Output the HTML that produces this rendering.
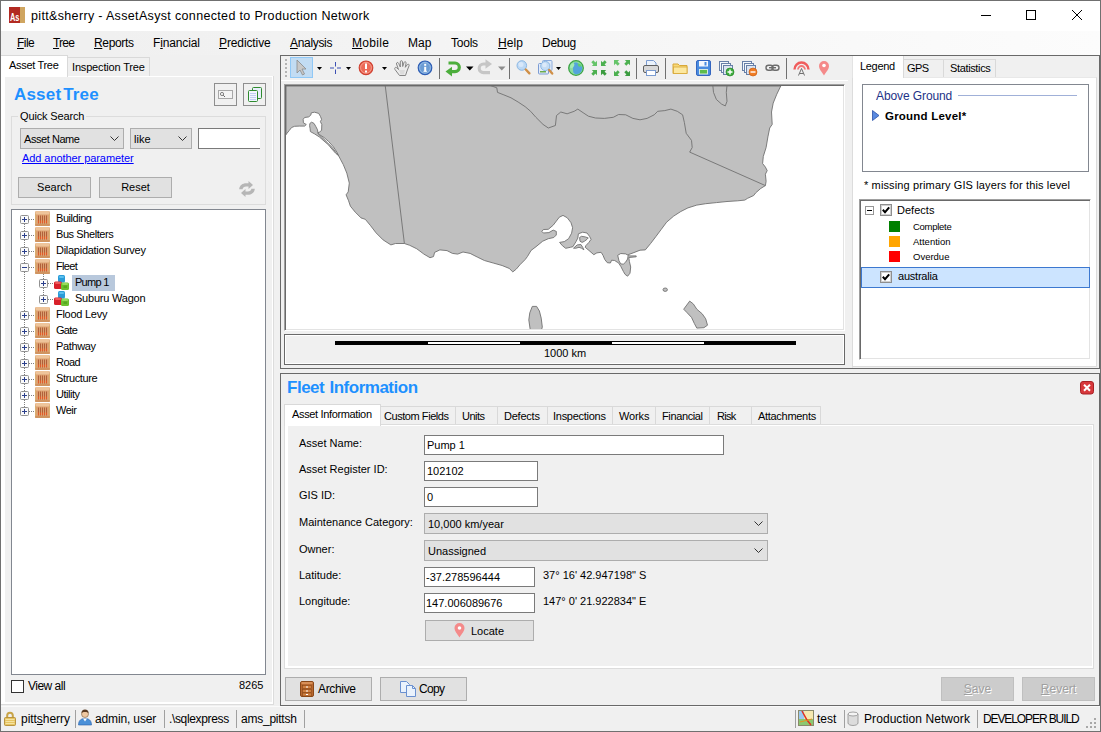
<!DOCTYPE html>
<html><head><meta charset="utf-8">
<style>
*{box-sizing:border-box;margin:0;padding:0}
html,body{width:1101px;height:732px;overflow:hidden;background:#f0f0f0}
body{font-family:"Liberation Sans",sans-serif;font-size:11px;color:#000;position:relative}
.a{position:absolute}
.t{position:absolute;white-space:nowrap;line-height:14px}
.ui{font-size:12px}
.btn{position:absolute;background:#e1e1e1;border:1px solid #adadad}
.inp{position:absolute;background:#fff;border:1px solid #7a7a7a}
.cmb{position:absolute;background:#e1e1e1;border:1px solid #adadad}
.tab{position:absolute;background:#f0f0f0;border:1px solid #d9d9d9;border-bottom:none}
.tabs{position:absolute;background:#fff;border:1px solid #d9d9d9;border-bottom:none}
.sep{position:absolute;width:1px;background:#a0a0a0}
.chev{position:absolute;width:9px;height:5px}
</style></head><body>
<!-- title bar -->
<div class="a" style="left:0;top:0;width:1101px;height:31px;background:#fff"></div>
<svg class="a" style="left:9px;top:7px" width="16" height="16"><rect width="11" height="16" fill="#b22a22"/><rect x="11" width="5" height="16" fill="#cfa560"/><text x="1" y="14" font-family="Liberation Sans" font-size="11" font-weight="bold" fill="#fff" textLength="9.500" lengthAdjust="spacingAndGlyphs">As</text></svg>
<div class="t" style="letter-spacing:0.34px;left:31px;top:8px;font-size:12.500px;line-height:16px">pitt&amp;sherry - AssetAsyst connected to Production Network</div>
<svg class="a" style="left:975px;top:1px" width="125" height="30" fill="none" stroke="#000" stroke-width="1"><path d="M6 14.500h10"/><rect x="51.500" y="9.500" width="9" height="9"/><path d="M97 9l10 10M107 9l-10 10"/></svg>
<!-- menu bar -->
<div class="a" style="left:1px;top:31px;width:1099px;height:24px;background:linear-gradient(to right,#f0f0f0 0%,#f0f0f0 10%,#fcfcfc 100%)"></div>
<div class="t ui" style="letter-spacing:-0.55px;left:17px;top:36px"><u>F</u>ile</div>
<div class="t ui" style="letter-spacing:-0.78px;left:53px;top:36px"><u>T</u>ree</div>
<div class="t ui" style="letter-spacing:-0.34px;left:94px;top:36px"><u>R</u>eports</div>
<div class="t ui" style="letter-spacing:-0.14px;left:153px;top:36px">F<u>i</u>nancial</div>
<div class="t ui" style="letter-spacing:-0.11px;left:219px;top:36px"><u>P</u>redictive</div>
<div class="t ui" style="letter-spacing:-0.33px;left:290px;top:36px"><u>A</u>nalysis</div>
<div class="t ui" style="letter-spacing:0.33px;left:352px;top:36px"><u>M</u>obile</div>
<div class="t ui" style="letter-spacing:-0.02px;left:408px;top:36px">Map</div>
<div class="t ui" style="letter-spacing:-0.23px;left:451px;top:36px">Tools</div>
<div class="t ui" style="letter-spacing:0.04px;left:498px;top:36px"><u>H</u>elp</div>
<div class="t ui" style="letter-spacing:-0.27px;left:542px;top:36px">Debug</div>

<!-- LEFT PANEL -->
<div class="a" style="left:1px;top:76px;width:273px;height:629px;background:#fff;border-bottom:1px solid #dcdcdc;border-right:1px solid #dcdcdc"></div>
<div class="a" style="left:5px;top:77px;width:267px;height:625px;background:#f0f0f0"></div>
<div class="tab" style="left:67px;top:57px;width:83px;height:19px"></div>
<div class="tabs" style="left:1px;top:55px;width:67px;height:22px;border-left:none"></div>
<div class="t" style="letter-spacing:-0.31px;left:9px;top:58px">Asset Tree</div>
<div class="t" style="letter-spacing:-0.17px;left:72px;top:60px">Inspection Tree</div>
<div class="t" style="letter-spacing:0.19px;left:14px;top:86px;font-size:17px;font-weight:bold;color:#1e90ff;line-height:18px;word-spacing:-3px">Asset Tree</div>
<div class="btn" style="left:214px;top:83px;width:23px;height:23px;background:#f0f0f0;border-color:#8e8e8e"></div>
<div class="btn" style="left:243px;top:83px;width:23px;height:23px;background:#f0f0f0;border-color:#8e8e8e"></div>
<svg class="a" style="left:218px;top:90px" width="16" height="10"><rect x=".5" y=".5" width="14" height="8" fill="#f4f4f4" stroke="#a8a8a8"/><circle cx="4" cy="4" r="1.600" fill="none" stroke="#666" stroke-width=".8"/><path d="M5.200 5.200l1.800 1.800" stroke="#666"/></svg>
<svg class="a" style="left:246px;top:86px" width="17" height="17"><rect x="6.500" y="1.500" width="9" height="11" rx="1" fill="#e8eefc" stroke="#2e8b2e"/><rect x="2.500" y="4.500" width="9" height="11" rx="1" fill="#f2f5ff" stroke="#2e8b2e"/><path d="M4 7.500h6M4 9.500h6M4 11.500h6M4 13.500h6" stroke="#b4c4f0" stroke-width=".8"/></svg>
<!-- group box -->
<div class="a" style="left:11px;top:116px;width:255px;height:89px;border:1px solid #dcdcdc"></div>
<div class="t" style="letter-spacing:-0.14px;left:18px;top:109px;background:#f0f0f0;padding:0 2px">Quick Search</div>
<div class="cmb" style="left:20px;top:128px;width:104px;height:21px"></div>
<div class="t" style="letter-spacing:-0.44px;left:24px;top:132px">Asset Name</div>
<div class="cmb" style="left:130px;top:128px;width:62px;height:21px"></div>
<div class="t" style="left:134px;top:132px">like</div>
<svg class="chev" style="left:110px;top:136px" viewBox="0 0 9 5"><path d="M.5 .5l4 4 4-4" fill="none" stroke="#333" stroke-width="1"/></svg>
<svg class="chev" style="left:178px;top:136px" viewBox="0 0 9 5"><path d="M.5 .5l4 4 4-4" fill="none" stroke="#333" stroke-width="1"/></svg>
<div class="inp" style="left:198px;top:128px;width:62px;height:21px;border-right:none"></div>
<div class="t" style="letter-spacing:-0.07px;left:22px;top:151px;color:#0000ff;text-decoration:underline">Add another parameter</div>
<div class="btn" style="left:18px;top:177px;width:73px;height:21px"></div>
<div class="t" style="left:18px;top:180px;width:73px;text-align:center">Search</div>
<div class="btn" style="left:99px;top:177px;width:73px;height:21px"></div>
<div class="t" style="left:99px;top:180px;width:73px;text-align:center">Reset</div>
<!-- tree box -->
<div class="a" style="left:11px;top:209px;width:255px;height:466px;background:#fff;border:1px solid #828790"></div>

<div class="a" style="left:24px;top:220px;width:1px;height:192px;background-image:linear-gradient(to bottom,#808080 50%,transparent 50%);background-size:1px 2px"></div>
<div class="a" style="left:43px;top:274px;width:1px;height:26px;background-image:linear-gradient(to bottom,#808080 50%,transparent 50%);background-size:1px 2px"></div>
<div class="a" style="left:29px;top:219px;width:6px;height:1px;background-image:linear-gradient(to right,#808080 50%,transparent 50%);background-size:2px 1px"></div>
<svg class="a" style="left:20px;top:215px" width="9" height="9"><rect x=".5" y=".5" width="8" height="8" rx="1" fill="#fafafa" stroke="#919191"/><path d="M2 4.500h5" stroke="#2b3f8c" stroke-width="1"/><path d="M4.500 2v5" stroke="#2b3f8c" stroke-width="1"/></svg>
<svg class="a" style="left:35px;top:211px" width="15" height="15"><rect x="0" y="0" width="15" height="15" rx="1.500" fill="#dca070"/><rect x=".5" y="0" width="14" height="3.500" rx="1" fill="#eec49a"/><rect x="0" y="13" width="15" height="2" rx="1" fill="#d09460"/><path d="M3.500 4.500v8M5.500 4.500v8M7.500 4.500v8M9.500 4.500v8M11.500 4.500v8" stroke="#b0603a" stroke-width="1"/><path d="M3.500 9.500v2.500M5.500 9.500v2.500M7.500 9.500v2.500M9.500 9.500v2.500M11.500 9.500v2.500" stroke="#e45a28" stroke-width="1"/><path d="M.5 3v10M14.500 3v10" stroke="#d8b070" stroke-width="1"/></svg>
<div class="t" style="letter-spacing:-0.45px;left:56px;top:211px">Building</div>
<div class="a" style="left:29px;top:235px;width:6px;height:1px;background-image:linear-gradient(to right,#808080 50%,transparent 50%);background-size:2px 1px"></div>
<svg class="a" style="left:20px;top:231px" width="9" height="9"><rect x=".5" y=".5" width="8" height="8" rx="1" fill="#fafafa" stroke="#919191"/><path d="M2 4.500h5" stroke="#2b3f8c" stroke-width="1"/><path d="M4.500 2v5" stroke="#2b3f8c" stroke-width="1"/></svg>
<svg class="a" style="left:35px;top:227px" width="15" height="15"><rect x="0" y="0" width="15" height="15" rx="1.500" fill="#dca070"/><rect x=".5" y="0" width="14" height="3.500" rx="1" fill="#eec49a"/><rect x="0" y="13" width="15" height="2" rx="1" fill="#d09460"/><path d="M3.500 4.500v8M5.500 4.500v8M7.500 4.500v8M9.500 4.500v8M11.500 4.500v8" stroke="#b0603a" stroke-width="1"/><path d="M3.500 9.500v2.500M5.500 9.500v2.500M7.500 9.500v2.500M9.500 9.500v2.500M11.500 9.500v2.500" stroke="#e45a28" stroke-width="1"/><path d="M.5 3v10M14.500 3v10" stroke="#d8b070" stroke-width="1"/></svg>
<div class="t" style="letter-spacing:-0.42px;left:56px;top:227px">Bus Shelters</div>
<div class="a" style="left:29px;top:251px;width:6px;height:1px;background-image:linear-gradient(to right,#808080 50%,transparent 50%);background-size:2px 1px"></div>
<svg class="a" style="left:20px;top:247px" width="9" height="9"><rect x=".5" y=".5" width="8" height="8" rx="1" fill="#fafafa" stroke="#919191"/><path d="M2 4.500h5" stroke="#2b3f8c" stroke-width="1"/><path d="M4.500 2v5" stroke="#2b3f8c" stroke-width="1"/></svg>
<svg class="a" style="left:35px;top:243px" width="15" height="15"><rect x="0" y="0" width="15" height="15" rx="1.500" fill="#dca070"/><rect x=".5" y="0" width="14" height="3.500" rx="1" fill="#eec49a"/><rect x="0" y="13" width="15" height="2" rx="1" fill="#d09460"/><path d="M3.500 4.500v8M5.500 4.500v8M7.500 4.500v8M9.500 4.500v8M11.500 4.500v8" stroke="#b0603a" stroke-width="1"/><path d="M3.500 9.500v2.500M5.500 9.500v2.500M7.500 9.500v2.500M9.500 9.500v2.500M11.500 9.500v2.500" stroke="#e45a28" stroke-width="1"/><path d="M.5 3v10M14.500 3v10" stroke="#d8b070" stroke-width="1"/></svg>
<div class="t" style="letter-spacing:-0.27px;left:56px;top:243px">Dilapidation Survey</div>
<div class="a" style="left:29px;top:267px;width:6px;height:1px;background-image:linear-gradient(to right,#808080 50%,transparent 50%);background-size:2px 1px"></div>
<svg class="a" style="left:20px;top:263px" width="9" height="9"><rect x=".5" y=".5" width="8" height="8" rx="1" fill="#fafafa" stroke="#919191"/><path d="M2 4.500h5" stroke="#2b3f8c" stroke-width="1"/></svg>
<svg class="a" style="left:35px;top:259px" width="15" height="15"><rect x="0" y="0" width="15" height="15" rx="1.500" fill="#dca070"/><rect x=".5" y="0" width="14" height="3.500" rx="1" fill="#eec49a"/><rect x="0" y="13" width="15" height="2" rx="1" fill="#d09460"/><path d="M3.500 4.500v8M5.500 4.500v8M7.500 4.500v8M9.500 4.500v8M11.500 4.500v8" stroke="#b0603a" stroke-width="1"/><path d="M3.500 9.500v2.500M5.500 9.500v2.500M7.500 9.500v2.500M9.500 9.500v2.500M11.500 9.500v2.500" stroke="#e45a28" stroke-width="1"/><path d="M.5 3v10M14.500 3v10" stroke="#d8b070" stroke-width="1"/></svg>
<div class="t" style="letter-spacing:-0.67px;left:56px;top:259px">Fleet</div>
<div class="a" style="left:48px;top:283px;width:6px;height:1px;background-image:linear-gradient(to right,#808080 50%,transparent 50%);background-size:2px 1px"></div>
<svg class="a" style="left:39px;top:279px" width="9" height="9"><rect x=".5" y=".5" width="8" height="8" rx="1" fill="#fafafa" stroke="#919191"/><path d="M2 4.500h5" stroke="#2b3f8c" stroke-width="1"/><path d="M4.500 2v5" stroke="#2b3f8c" stroke-width="1"/></svg>
<svg class="a" style="left:54px;top:275px" width="16" height="16"><rect x="4" y="0" width="7" height="7.500" rx="1.500" fill="#2a9bd8"/><rect x="5" y="1" width="5" height="2" rx="1" fill="#5cc0ee"/><rect x="0" y="6.500" width="8" height="7.500" rx="1.500" fill="#d8202a"/><rect x="1" y="7" width="6" height="2" rx="1" fill="#ee5a5a"/><rect x="7" y="7.500" width="8" height="7.500" rx="1.500" fill="#6cc030"/><rect x="8" y="8" width="6" height="2" rx="1" fill="#98dc5c"/><rect x="9.500" y="10.500" width="3.500" height="2.500" fill="#58a820"/></svg>
<div class="a" style="left:72px;top:275px;width:43px;height:16px;background:#b8c8dc"></div>
<div class="t" style="letter-spacing:-0.72px;left:75px;top:275px">Pump 1</div>
<div class="a" style="left:48px;top:299px;width:6px;height:1px;background-image:linear-gradient(to right,#808080 50%,transparent 50%);background-size:2px 1px"></div>
<svg class="a" style="left:39px;top:295px" width="9" height="9"><rect x=".5" y=".5" width="8" height="8" rx="1" fill="#fafafa" stroke="#919191"/><path d="M2 4.500h5" stroke="#2b3f8c" stroke-width="1"/><path d="M4.500 2v5" stroke="#2b3f8c" stroke-width="1"/></svg>
<svg class="a" style="left:54px;top:291px" width="16" height="16"><rect x="4" y="0" width="7" height="7.500" rx="1.500" fill="#2a9bd8"/><rect x="5" y="1" width="5" height="2" rx="1" fill="#5cc0ee"/><rect x="0" y="6.500" width="8" height="7.500" rx="1.500" fill="#d8202a"/><rect x="1" y="7" width="6" height="2" rx="1" fill="#ee5a5a"/><rect x="7" y="7.500" width="8" height="7.500" rx="1.500" fill="#6cc030"/><rect x="8" y="8" width="6" height="2" rx="1" fill="#98dc5c"/><rect x="9.500" y="10.500" width="3.500" height="2.500" fill="#58a820"/></svg>
<div class="t" style="letter-spacing:-0.22px;left:75px;top:291px">Suburu Wagon</div>
<div class="a" style="left:29px;top:315px;width:6px;height:1px;background-image:linear-gradient(to right,#808080 50%,transparent 50%);background-size:2px 1px"></div>
<svg class="a" style="left:20px;top:311px" width="9" height="9"><rect x=".5" y=".5" width="8" height="8" rx="1" fill="#fafafa" stroke="#919191"/><path d="M2 4.500h5" stroke="#2b3f8c" stroke-width="1"/><path d="M4.500 2v5" stroke="#2b3f8c" stroke-width="1"/></svg>
<svg class="a" style="left:35px;top:307px" width="15" height="15"><rect x="0" y="0" width="15" height="15" rx="1.500" fill="#dca070"/><rect x=".5" y="0" width="14" height="3.500" rx="1" fill="#eec49a"/><rect x="0" y="13" width="15" height="2" rx="1" fill="#d09460"/><path d="M3.500 4.500v8M5.500 4.500v8M7.500 4.500v8M9.500 4.500v8M11.500 4.500v8" stroke="#b0603a" stroke-width="1"/><path d="M3.500 9.500v2.500M5.500 9.500v2.500M7.500 9.500v2.500M9.500 9.500v2.500M11.500 9.500v2.500" stroke="#e45a28" stroke-width="1"/><path d="M.5 3v10M14.500 3v10" stroke="#d8b070" stroke-width="1"/></svg>
<div class="t" style="letter-spacing:-0.27px;left:56px;top:307px">Flood Levy</div>
<div class="a" style="left:29px;top:331px;width:6px;height:1px;background-image:linear-gradient(to right,#808080 50%,transparent 50%);background-size:2px 1px"></div>
<svg class="a" style="left:20px;top:327px" width="9" height="9"><rect x=".5" y=".5" width="8" height="8" rx="1" fill="#fafafa" stroke="#919191"/><path d="M2 4.500h5" stroke="#2b3f8c" stroke-width="1"/><path d="M4.500 2v5" stroke="#2b3f8c" stroke-width="1"/></svg>
<svg class="a" style="left:35px;top:323px" width="15" height="15"><rect x="0" y="0" width="15" height="15" rx="1.500" fill="#dca070"/><rect x=".5" y="0" width="14" height="3.500" rx="1" fill="#eec49a"/><rect x="0" y="13" width="15" height="2" rx="1" fill="#d09460"/><path d="M3.500 4.500v8M5.500 4.500v8M7.500 4.500v8M9.500 4.500v8M11.500 4.500v8" stroke="#b0603a" stroke-width="1"/><path d="M3.500 9.500v2.500M5.500 9.500v2.500M7.500 9.500v2.500M9.500 9.500v2.500M11.500 9.500v2.500" stroke="#e45a28" stroke-width="1"/><path d="M.5 3v10M14.500 3v10" stroke="#d8b070" stroke-width="1"/></svg>
<div class="t" style="letter-spacing:-0.69px;left:56px;top:323px">Gate</div>
<div class="a" style="left:29px;top:347px;width:6px;height:1px;background-image:linear-gradient(to right,#808080 50%,transparent 50%);background-size:2px 1px"></div>
<svg class="a" style="left:20px;top:343px" width="9" height="9"><rect x=".5" y=".5" width="8" height="8" rx="1" fill="#fafafa" stroke="#919191"/><path d="M2 4.500h5" stroke="#2b3f8c" stroke-width="1"/><path d="M4.500 2v5" stroke="#2b3f8c" stroke-width="1"/></svg>
<svg class="a" style="left:35px;top:339px" width="15" height="15"><rect x="0" y="0" width="15" height="15" rx="1.500" fill="#dca070"/><rect x=".5" y="0" width="14" height="3.500" rx="1" fill="#eec49a"/><rect x="0" y="13" width="15" height="2" rx="1" fill="#d09460"/><path d="M3.500 4.500v8M5.500 4.500v8M7.500 4.500v8M9.500 4.500v8M11.500 4.500v8" stroke="#b0603a" stroke-width="1"/><path d="M3.500 9.500v2.500M5.500 9.500v2.500M7.500 9.500v2.500M9.500 9.500v2.500M11.500 9.500v2.500" stroke="#e45a28" stroke-width="1"/><path d="M.5 3v10M14.500 3v10" stroke="#d8b070" stroke-width="1"/></svg>
<div class="t" style="letter-spacing:-0.35px;left:56px;top:339px">Pathway</div>
<div class="a" style="left:29px;top:363px;width:6px;height:1px;background-image:linear-gradient(to right,#808080 50%,transparent 50%);background-size:2px 1px"></div>
<svg class="a" style="left:20px;top:359px" width="9" height="9"><rect x=".5" y=".5" width="8" height="8" rx="1" fill="#fafafa" stroke="#919191"/><path d="M2 4.500h5" stroke="#2b3f8c" stroke-width="1"/><path d="M4.500 2v5" stroke="#2b3f8c" stroke-width="1"/></svg>
<svg class="a" style="left:35px;top:355px" width="15" height="15"><rect x="0" y="0" width="15" height="15" rx="1.500" fill="#dca070"/><rect x=".5" y="0" width="14" height="3.500" rx="1" fill="#eec49a"/><rect x="0" y="13" width="15" height="2" rx="1" fill="#d09460"/><path d="M3.500 4.500v8M5.500 4.500v8M7.500 4.500v8M9.500 4.500v8M11.500 4.500v8" stroke="#b0603a" stroke-width="1"/><path d="M3.500 9.500v2.500M5.500 9.500v2.500M7.500 9.500v2.500M9.500 9.500v2.500M11.500 9.500v2.500" stroke="#e45a28" stroke-width="1"/><path d="M.5 3v10M14.500 3v10" stroke="#d8b070" stroke-width="1"/></svg>
<div class="t" style="letter-spacing:-0.53px;left:56px;top:355px">Road</div>
<div class="a" style="left:29px;top:379px;width:6px;height:1px;background-image:linear-gradient(to right,#808080 50%,transparent 50%);background-size:2px 1px"></div>
<svg class="a" style="left:20px;top:375px" width="9" height="9"><rect x=".5" y=".5" width="8" height="8" rx="1" fill="#fafafa" stroke="#919191"/><path d="M2 4.500h5" stroke="#2b3f8c" stroke-width="1"/><path d="M4.500 2v5" stroke="#2b3f8c" stroke-width="1"/></svg>
<svg class="a" style="left:35px;top:371px" width="15" height="15"><rect x="0" y="0" width="15" height="15" rx="1.500" fill="#dca070"/><rect x=".5" y="0" width="14" height="3.500" rx="1" fill="#eec49a"/><rect x="0" y="13" width="15" height="2" rx="1" fill="#d09460"/><path d="M3.500 4.500v8M5.500 4.500v8M7.500 4.500v8M9.500 4.500v8M11.500 4.500v8" stroke="#b0603a" stroke-width="1"/><path d="M3.500 9.500v2.500M5.500 9.500v2.500M7.500 9.500v2.500M9.500 9.500v2.500M11.500 9.500v2.500" stroke="#e45a28" stroke-width="1"/><path d="M.5 3v10M14.500 3v10" stroke="#d8b070" stroke-width="1"/></svg>
<div class="t" style="letter-spacing:-0.37px;left:56px;top:371px">Structure</div>
<div class="a" style="left:29px;top:395px;width:6px;height:1px;background-image:linear-gradient(to right,#808080 50%,transparent 50%);background-size:2px 1px"></div>
<svg class="a" style="left:20px;top:391px" width="9" height="9"><rect x=".5" y=".5" width="8" height="8" rx="1" fill="#fafafa" stroke="#919191"/><path d="M2 4.500h5" stroke="#2b3f8c" stroke-width="1"/><path d="M4.500 2v5" stroke="#2b3f8c" stroke-width="1"/></svg>
<svg class="a" style="left:35px;top:387px" width="15" height="15"><rect x="0" y="0" width="15" height="15" rx="1.500" fill="#dca070"/><rect x=".5" y="0" width="14" height="3.500" rx="1" fill="#eec49a"/><rect x="0" y="13" width="15" height="2" rx="1" fill="#d09460"/><path d="M3.500 4.500v8M5.500 4.500v8M7.500 4.500v8M9.500 4.500v8M11.500 4.500v8" stroke="#b0603a" stroke-width="1"/><path d="M3.500 9.500v2.500M5.500 9.500v2.500M7.500 9.500v2.500M9.500 9.500v2.500M11.500 9.500v2.500" stroke="#e45a28" stroke-width="1"/><path d="M.5 3v10M14.500 3v10" stroke="#d8b070" stroke-width="1"/></svg>
<div class="t" style="letter-spacing:-0.47px;left:56px;top:387px">Utility</div>
<div class="a" style="left:29px;top:411px;width:6px;height:1px;background-image:linear-gradient(to right,#808080 50%,transparent 50%);background-size:2px 1px"></div>
<svg class="a" style="left:20px;top:407px" width="9" height="9"><rect x=".5" y=".5" width="8" height="8" rx="1" fill="#fafafa" stroke="#919191"/><path d="M2 4.500h5" stroke="#2b3f8c" stroke-width="1"/><path d="M4.500 2v5" stroke="#2b3f8c" stroke-width="1"/></svg>
<svg class="a" style="left:35px;top:403px" width="15" height="15"><rect x="0" y="0" width="15" height="15" rx="1.500" fill="#dca070"/><rect x=".5" y="0" width="14" height="3.500" rx="1" fill="#eec49a"/><rect x="0" y="13" width="15" height="2" rx="1" fill="#d09460"/><path d="M3.500 4.500v8M5.500 4.500v8M7.500 4.500v8M9.500 4.500v8M11.500 4.500v8" stroke="#b0603a" stroke-width="1"/><path d="M3.500 9.500v2.500M5.500 9.500v2.500M7.500 9.500v2.500M9.500 9.500v2.500M11.500 9.500v2.500" stroke="#e45a28" stroke-width="1"/><path d="M.5 3v10M14.500 3v10" stroke="#d8b070" stroke-width="1"/></svg>
<div class="t" style="letter-spacing:-0.51px;left:56px;top:403px">Weir</div>
<!-- left bottom -->
<div class="a" style="left:11px;top:680px;width:13px;height:13px;background:#fff;border:1px solid #333"></div>
<div class="t ui" style="letter-spacing:-0.51px;left:28px;top:679px">View all</div>
<div class="t" style="left:239px;top:678px">8265</div>
<!-- refresh icon -->
<svg class="a" style="left:238px;top:180px" width="18" height="18" viewBox="238 180 18 18"><path d="M239.200 189.300c.3-4 3.500-6 7-6h2.300v-2.300l4.500 4-4.500 4v-2.400h-2.300c-2 0-3.300 1-3.600 2.700z" fill="#b6b6b6"/><path d="M254.800 188.700c-.3 4-3.500 6-7 6h-2.300v2.300l-4.500-4 4.500-4v2.400h2.300c2 0 3.300-1 3.600-2.700z" fill="#b6b6b6"/></svg>

<!-- STATUS BAR -->
<div class="a" style="left:1px;top:706px;width:1099px;height:25px;background:#f0f0f0;border-top:1px solid #fafafa"></div>
<svg class="a" style="left:4px;top:711px" width="12" height="15"><path d="M3.200 6.500V4.500a2.800 2.800 0 0 1 5.600 0v2" fill="none" stroke="#c8a448" stroke-width="2"/><rect x=".5" y="6.500" width="11" height="8" rx="1" fill="#e6c462" stroke="#b48c34" stroke-width=".9"/><path d="M1.500 8.500h9M1.500 10.500h9M1.500 12.500h9" stroke="#f6e6a8" stroke-width=".9"/></svg>
<div class="t ui" style="letter-spacing:-0.04px;left:21px;top:712px">pitt<u>s</u>herry</div>
<div class="sep" style="left:75px;top:710px;height:18px"></div>
<svg class="a" style="left:78px;top:709px" width="14" height="17"><circle cx="7" cy="5" r="3.500" fill="#f0c8a0" stroke="#7a5a3a" stroke-width=".6"/><path d="M3.500 4a3.500 3.500 0 0 1 7 0c-1-1.500-6-1.500-7 0z" fill="#5a3a20"/><path d="M0.500 16c0-5 3-6.500 6.500-6.500s6.500 1.500 6.500 6.500z" fill="#4a90d8" stroke="#2a60a8" stroke-width=".6"/><path d="M5 9.500l2 3 2-3z" fill="#fff"/></svg>
<div class="t ui" style="letter-spacing:-0.14px;left:95px;top:712px">admin, user</div>
<div class="sep" style="left:164px;top:710px;height:18px"></div>
<div class="t ui" style="letter-spacing:-0.35px;left:169px;top:712px">.\sqlexpress</div>
<div class="sep" style="left:236px;top:710px;height:18px"></div>
<div class="t ui" style="letter-spacing:-0.24px;left:241px;top:712px">ams_pittsh</div>
<div class="sep" style="left:304px;top:710px;height:18px"></div>
<div class="sep" style="left:795px;top:710px;height:18px"></div>
<svg class="a" style="left:798px;top:710px" width="16" height="16"><rect x=".5" y=".5" width="15" height="15" fill="#f6e9b0" stroke="#8a8a6a"/><rect x="1" y="9" width="14" height="6" fill="#8cc870"/><rect x="1" y="1" width="5" height="8" fill="#9cc8f0"/><path d="M4 1l5 9 4 5" stroke="#e03020" stroke-width="1.500" fill="none"/><path d="M2 12l12-3" stroke="#e89020" stroke-width="1" fill="none"/></svg>
<div class="t ui" style="left:817px;top:712px">test</div>
<div class="sep" style="left:844px;top:710px;height:18px"></div>
<svg class="a" style="left:847px;top:711px" width="12" height="15"><path d="M1 3v9c0 1.500 2.500 2.500 5 2.500s5-1 5-2.500V3z" fill="#dcdcdc" stroke="#8e8e8e" stroke-width=".8"/><ellipse cx="6" cy="3" rx="5" ry="2" fill="#f4f4f4" stroke="#8e8e8e" stroke-width=".8"/></svg>
<div class="t ui" style="letter-spacing:0.07px;left:864px;top:712px">Production Network</div>
<div class="sep" style="left:977px;top:710px;height:18px"></div>
<div class="t ui" style="letter-spacing:-1.1px;left:983px;top:712px">DEVELOPER BUILD</div>
<svg class="a" style="left:1086px;top:718px" width="12" height="12" fill="#a8a8a8"><rect x="8" y="0" width="2" height="2"/><rect x="4" y="4" width="2" height="2"/><rect x="8" y="4" width="2" height="2"/><rect x="0" y="8" width="2" height="2"/><rect x="4" y="8" width="2" height="2"/><rect x="8" y="8" width="2" height="2"/></svg>

<!-- UPPER RIGHT CONTAINER -->
<div class="a" style="left:280px;top:55px;width:820px;height:314px;border:1px solid #696969"></div>
<div class="a" style="left:281px;top:80px;width:567px;height:1px;background:#fff"></div>
<!-- toolbar -->
<svg class="a" style="left:281px;top:56px" width="570" height="24" viewBox="281 56 570 24">
<g fill="#b4b4b4"><rect x="285" y="59" width="2" height="2"/><rect x="285" y="63" width="2" height="2"/><rect x="285" y="67" width="2" height="2"/><rect x="285" y="71" width="2" height="2"/><rect x="285" y="75" width="2" height="2"/></g>
<rect x="290.500" y="57.500" width="22" height="20" fill="#c2dcf3" stroke="#90c8f6"/>
<path d="M297 60v13l3-3 2.500 5 2-1-2.500-5h4z" fill="#c8c8c8" stroke="#8a8a8a" stroke-width=".8"/>
<g fill="#000"><path d="M317 67h5l-2.500 3z"/><path d="M346 67h5l-2.500 3z"/><path d="M382 67h5l-2.500 3z"/><path d="M466 66.500h7.500l-3.750 4z"/><path d="M556 67h5l-2.500 3z"/></g>
<path d="M498 66.500h7.500l-3.750 4z" fill="#8c8c8c"/>
<path d="M335.500 62v4.500M335.500 69.500v4.500M330 68h4M337 68h4" stroke="#3c50b4" stroke-width="1" fill="none"/>
<circle cx="366" cy="67.800" r="6.800" fill="#ec6a58" stroke="#d04030" stroke-width="1.200"/><circle cx="366" cy="67.800" r="5.400" fill="none" stroke="#f8a898" stroke-width=".8"/><rect x="365" y="63.500" width="2" height="5.500" fill="#fff"/><rect x="365" y="70.500" width="2" height="2" fill="#fff"/>
<g transform="translate(394,60)"><path d="M5.500 15.500L1 9.500C0 8 1.500 6.500 3 8L4.500 9.500L2.500 4C2 2.500 4 1.800 4.600 3.200L6.300 7L6.300 1.800C6.300 .3 8.500 .3 8.500 1.800L8.700 6.500L10 2.500C10.400 1.200 12.400 1.700 12.100 3.100L11.300 7.300L13.300 4.600C14.100 3.500 15.700 4.500 15.100 5.700L13 11L11.500 15.500Z" fill="#ececec" stroke="#858585" stroke-width="1" stroke-linejoin="round"/><path d="M5 10l6 0 -1 4.500h-3.500z" fill="#dcdcdc"/></g>
<circle cx="425" cy="67.800" r="6.800" fill="#6c9cd4" stroke="#2c5cb4" stroke-width="1.200"/><circle cx="425" cy="67.800" r="5.400" fill="none" stroke="#9cc0e8" stroke-width=".8"/><rect x="424.200" y="66.800" width="2" height="4.500" fill="#fff"/><rect x="423.500" y="70.800" width="3.400" height="1" fill="#fff"/><rect x="424.200" y="63.800" width="2" height="2" fill="#fff"/>
<path d="M439.500 58v21M509.500 58v21M636.500 58v21M665.500 58v21M786.500 58v21" stroke="#707070" stroke-width="1"/>
<path d="M448.500 63h6.500a4.300 4.300 0 0 1 0 8.600h-3.500" fill="none" stroke="#4cae3c" stroke-width="3.200"/><path d="M445.500 71.600l6.500-4.800v9.600z" fill="#4cae3c"/>
<path d="M487 64h-3.500a4.300 4.300 0 0 0 0 8.600h6.500" fill="none" stroke="#c6c6c6" stroke-width="3.200"/><path d="M492 64l-6.500-4.800v9.600z" fill="#c6c6c6"/>
<circle cx="521.800" cy="65.500" r="4.800" fill="#bcd8f4" stroke="#8cb8e4" stroke-width="1"/><circle cx="521" cy="64.500" r="2.500" fill="#d8e8fa"/><path d="M525.800 69.500l3.600 3.800" stroke="#d09048" stroke-width="2.400" stroke-linecap="round"/>
<rect x="542.500" y="60.500" width="9.500" height="10" rx="1" fill="#e0eaf8" stroke="#8cacdc"/><rect x="538.500" y="63.500" width="10" height="10.500" rx="1" fill="#e4ecf8" stroke="#7c9cd4"/><rect x="540" y="71" width="6" height="1.500" fill="#6cac4c"/><circle cx="545.300" cy="66" r="4.600" fill="#c4dcf4" stroke="#8cb8e4"/><circle cx="544.500" cy="65" r="2.300" fill="#dceafa"/><path d="M549.200 70l3 3.500" stroke="#d09048" stroke-width="2.400" stroke-linecap="round"/>
<circle cx="576" cy="68" r="7.300" fill="#8cdca0" stroke="#3ca444" stroke-width="1.300"/><path d="M574 63c2-1 4 0 5 1s2 1 3 3-1 5-2 6-3 1.500-5 1-2-3-2-5 0-4.500 1-6z" fill="#54a4dc"/><path d="M578 63.500c1.500 0 3 1 3.500 2s-1.500 1.500-2.500 1-1.500-2-1-3z" fill="#5cd070"/><path d="M570.500 65c1-1.500 2.500-2 3.500-1.500s0 3-1 4-2.500 1-2.800 0 0-1.800 .3-2.500z" fill="#a4ecb4"/>
<path d="M597.0 66.0L591.8 66.0L597.0 60.8Z" fill="#66c46a"/><path d="M592.3 61.3L595.2 64.2" stroke="#66c46a" stroke-width="2.800" fill="none"/><path d="M601.0 66.0L606.2 66.0L601.0 60.8Z" fill="#4cb050"/><path d="M605.7 61.3L602.8 64.2" stroke="#4cb050" stroke-width="2.800" fill="none"/><path d="M597.0 70.0L591.8 70.0L597.0 75.2Z" fill="#4cb050"/><path d="M592.3 74.7L595.2 71.8" stroke="#4cb050" stroke-width="2.800" fill="none"/><path d="M601.0 70.0L606.2 70.0L601.0 75.2Z" fill="#3c9c40"/><path d="M605.7 74.7L602.8 71.8" stroke="#3c9c40" stroke-width="2.800" fill="none"/><path d="M614.0 60.0L619.2 60.0L614.0 65.2Z" fill="#66c46a"/><path d="M618.7 64.7L615.8 61.8" stroke="#66c46a" stroke-width="2.800" fill="none"/><path d="M630.0 60.0L624.8 60.0L630.0 65.2Z" fill="#4cb050"/><path d="M625.3 64.7L628.2 61.8" stroke="#4cb050" stroke-width="2.800" fill="none"/><path d="M614.0 76.0L619.2 76.0L614.0 70.8Z" fill="#4cb050"/><path d="M618.7 71.3L615.8 74.2" stroke="#4cb050" stroke-width="2.800" fill="none"/><path d="M630.0 76.0L624.8 76.0L630.0 70.8Z" fill="#3c9c40"/><path d="M625.3 71.3L628.2 74.2" stroke="#3c9c40" stroke-width="2.800" fill="none"/>
<path d="M646.500 66v-5.500h7l2.500 2.500v3" fill="#eaf2fc" stroke="#7c9cd0"/><rect x="643.500" y="65.500" width="15" height="7" rx="1.500" fill="#d8d8d8" stroke="#606060"/><rect x="646.500" y="70.500" width="9" height="5" fill="#fff" stroke="#7c9cd0"/>
<path d="M673 64h5l1.500 1.500h7.500v8h-14z" fill="#f8d878" stroke="#d8a838"/><rect x="673.500" y="67" width="13.500" height="6.500" fill="#fce8a0" stroke="#d8a838" stroke-width=".8"/>
<rect x="696.500" y="60.500" width="14" height="15" rx="1.500" fill="#4a8ce0" stroke="#3466c0"/><rect x="699" y="61" width="9" height="5.500" fill="#f4f8fe"/><rect x="699.500" y="69.500" width="8" height="4.500" fill="#5cbc4c" stroke="#e4f0e4" stroke-width=".9"/><rect x="704.500" y="62" width="2" height="3.500" fill="#4a8ce0"/>
<g fill="#f4f8fc" stroke="#6880a8"><rect x="719.500" y="61.500" width="9" height="9"/><rect x="721.500" y="63.500" width="9" height="9"/><rect x="723.500" y="65.500" width="9" height="9" fill="#dce4f0"/></g><circle cx="730" cy="72" r="4" fill="#3cac3c" stroke="#208020" stroke-width=".6"/><path d="M727.500 72h5M730 69.500v5" stroke="#fff" stroke-width="1.400"/>
<g fill="#f4f8fc" stroke="#6880a8"><rect x="742.500" y="61.500" width="9" height="9"/><rect x="744.500" y="63.500" width="9" height="9"/><rect x="746.500" y="65.500" width="9" height="9" fill="#dce4f0"/></g><circle cx="753" cy="72" r="4" fill="#f07c24" stroke="#c85808" stroke-width=".6"/><path d="M750.500 72h5" stroke="#fff" stroke-width="1.400"/>
<rect x="766" y="65.200" width="7" height="5" rx="2.500" fill="none" stroke="#6c6c6c" stroke-width="1.400"/><rect x="772" y="65.200" width="7" height="5" rx="2.500" fill="none" stroke="#6c6c6c" stroke-width="1.400"/><path d="M769 67.700h7" stroke="#6c6c6c" stroke-width="1.400"/>
<path d="M794.500 69.500a7 7 0 0 1 14 0" fill="none" stroke="#f05c5c" stroke-width="2.400"/><path d="M798 69.500a3.500 3.500 0 0 1 7 0" fill="none" stroke="#f47878" stroke-width="1.800"/><path d="M798.500 75.500l3-7 3 7M799.500 73.500h4" fill="none" stroke="#707070" stroke-width="1"/>
<path d="M824 75.500c-2.500-4-5-6.500-5-9.500a5 5 0 0 1 10 0c0 3-2.500 5.500-5 9.500z" fill="#f48a8a"/><circle cx="824" cy="65.500" r="1.800" fill="#fff"/>
</svg>
<!-- map frame -->
<div class="a" style="left:284px;top:84px;width:561px;height:247px;background:#fff;border:1px solid;border-color:#a0a0a0 #fff #fff #a0a0a0;box-shadow:inset 1px 1px 0 #696969,inset -1px -1px 0 #e3e3e3"></div>

<svg class="a" style="left:0;top:0" width="1101" height="732" viewBox="0 0 1101 732"><defs><clipPath id="mc"><rect x="286" y="86" width="557" height="243"/></clipPath></defs><g clip-path="url(#mc)"><path d="M286.0 86.0 L286.0 134.8 L285.8 134.8 L286.9 133.4 L289.3 130.4 L291.6 127.5 L294.6 126.3 L299.3 126.1 L304.6 126.1 L306.3 124.5 L303.4 122.8 L303.2 119.3 L304.6 117.5 L308.7 116.9 L310.8 115.1 L311.3 112.8 L314.6 112.2 L318.7 113.4 L320.4 116.3 L321.6 119.3 L320.4 121.6 L321.8 124.5 L321.6 130.4 L319.3 132.2 L317.5 132.8 L319.3 134.5 L324.0 137.5 L328.7 141.6 L333.4 146.9 L336.9 152.2 L338.6 155.7 L340.4 159.2 L343.3 164.6 L346.8 173.1 L349.3 183.1 L348.2 191.9 L346.1 194.8 L348.6 200.8 L350.4 206.2 L355.3 212.2 L361.0 217.9 L365.3 219.3 L370.6 225.7 L376.0 232.8 L383.1 239.9 L390.9 244.9 L395.5 243.5 L404.4 243.5 L409.7 245.3 L416.8 248.8 L423.9 254.1 L430.0 257.7 L433.5 256.6 L434.6 252.4 L439.9 249.9 L447.0 250.6 L452.4 253.4 L457.7 254.1 L463.0 252.0 L470.1 253.4 L477.2 257.0 L484.4 260.5 L493.2 263.0 L502.1 265.5 L509.2 268.4 L512.8 271.9 L516.3 269.1 L519.9 264.8 L525.2 259.5 L527.4 256.6 L531.1 250.4 L536.0 246.7 L542.7 241.2 L548.3 238.7 L553.8 237.5 L556.3 235.0 L556.3 231.4 L553.2 230.1 L548.9 232.6 L543.4 233.0 L541.9 231.4 L543.4 229.5 L548.3 229.3 L553.2 225.2 L559.3 217.2 L563.0 215.4 L567.3 217.8 L571.0 222.7 L572.6 227.7 L571.6 233.2 L568.6 238.7 L564.3 241.6 L559.6 242.4 L562.4 245.7 L565.7 248.3 L570.4 247.3 L572.9 246.7 L575.9 241.8 L577.8 238.1 L578.4 233.8 L582.7 232.2 L587.0 233.0 L589.5 236.3 L591.1 239.3 L588.9 242.4 L585.8 245.7 L585.2 247.3 L588.9 250.4 L593.8 254.7 L596.8 252.9 L601.1 252.3 L603.0 255.3 L604.8 259.6 L607.3 262.7 L610.4 263.0 L611.6 260.2 L614.7 260.5 L617.1 262.1 L618.4 262.7 L620.8 266.4 L623.3 271.3 L625.1 274.4 L627.6 276.2 L630.0 273.2 L630.7 267.0 L629.4 261.5 L628.8 257.5 L636.2 256.8 L636.2 255.9 L629.4 255.9 L628.2 254.7 L633.1 252.9 L640.0 250.2 L645.3 249.9 L650.6 243.5 L656.0 236.4 L661.3 229.3 L666.6 222.2 L673.7 216.1 L680.8 211.5 L687.9 207.9 L696.8 205.1 L705.7 203.7 L716.4 202.6 L727.0 201.5 L737.7 200.8 L744.8 200.1 L747.6 198.3 L753.7 195.5 L755.5 193.0 L760.8 188.4 L765.4 185.6 L766.1 181.3 L765.4 174.2 L767.2 170.6 L765.4 167.1 L762.6 163.5 L763.3 156.4 L766.1 147.5 L767.9 136.9 L769.7 128.0 L772.2 124.4 L771.5 112.0 L773.2 103.1 L776.8 94.2 L781.1 85.3 L781.1 86.0Z" fill="#c0c0c0" stroke="#707070" stroke-width="0.9"/><path d="M309.9 123.4 L311.6 122.2 L314.0 123.4 L315.7 126.3 L317.5 129.8 L318.1 133.9 L322.8 138.1 L327.5 142.8 L332.2 147.5 L335.7 152.2 L338.6 155.7 L335.7 153.3 L331.0 148.0 L328.7 145.1 L324.0 141.0 L319.3 136.9 L314.6 133.9 L310.4 131.6 L310.1 128.7 L309.6 125.7Z" fill="#c0c0c0" stroke="#707070" stroke-width="0.9"/><path d="M385.2 85.3 L404.4 243.5" fill="none" stroke="#707070" stroke-width="0.9"/><path d="M489.7 85.3 L496.8 87.8 L497.5 92.4 L503.9 94.9 L511.0 97.8 L518.1 102.0 L525.2 106.7 L530.6 111.3 L535.9 117.3 L543.0 124.4 L548.3 128.0 L555.4 125.5 L556.5 115.5 L560.8 112.0 L567.1 113.8 L574.2 111.3 L577.8 109.1 L583.1 112.7 L588.4 116.2 L595.5 118.0 L604.4 118.4 L613.3 117.3 L618.6 114.5 L625.7 114.8 L632.9 118.4 L640.0 119.8 L647.1 118.4 L654.2 114.8 L657.7 111.3 L664.8 110.6 L670.9 109.1 L677.3 111.3 L682.6 114.8 L684.4 122.6 L686.2 133.3 L691.5 140.4 L692.2 147.5 L689.7 152.1 L765.4 185.6" fill="none" stroke="#707070" stroke-width="0.9"/><path d="M712.8 85.3 L713.5 92.4 L716.4 99.5 L721.7 104.2 L725.3 105.9 L727.0 101.3 L726.3 92.4 L727.0 85.3" fill="none" stroke="#707070" stroke-width="0.9"/><path d="M579.6 237.5 L581.5 236.3 L585.2 236.9 L588.2 237.9 L587.0 239.3 L584.5 241.2 L582.1 242.4 L580.0 241.2Z" fill="#c0c0c0" stroke="#707070" stroke-width="0.9"/><path d="M573.5 248.2 L577.2 244.9 L580.9 244.5 L582.7 247.3 L583.9 249.8 L581.5 248.2 L579.0 247.3 L575.9 248.2Z" fill="#c0c0c0" stroke="#707070" stroke-width="0.9"/><path d="M617.7 255.3 L620.8 253.5 L625.7 253.9 L628.2 255.3 L627.6 259.0 L625.7 262.1 L623.3 264.2 L620.8 263.9 L619.0 260.9Z" fill="#fff" stroke="#707070" stroke-width="0.9"/><ellipse cx="665.2" cy="289.7" rx="2.2" ry="1.7" fill="#c0c0c0" stroke="#707070" stroke-width="0.9"/><path d="M532.3 306.4 L536.6 306.4 L539.4 311.0 L541.2 318.1 L542.3 327.0 L541.6 329.5 L530.2 329.5 L528.8 319.9 L529.8 312.8Z" fill="#c0c0c0" stroke="#707070" stroke-width="0.9"/><path d="M683.7 309.2 L689.7 301.1 L693.3 303.9 L696.8 309.2 L702.2 313.8 L705.7 318.8 L707.5 325.2 L703.9 327.7 L696.8 328.1 L694.3 323.4 L691.5 317.4 L687.2 312.8Z" fill="#c0c0c0" stroke="#707070" stroke-width="0.9"/></g></svg>
<!-- scale bar box -->
<div class="a" style="left:284px;top:334px;width:561px;height:31px;border:1px solid #696969;box-shadow:inset 1px 1px 0 #fff, inset -1px -1px 0 #fff"></div>
<div class="a" style="left:335px;top:341px;width:461px;height:4px;background:#000"></div>
<div class="a" style="left:428px;top:342px;width:92px;height:2px;background:#fff"></div>
<div class="a" style="left:612px;top:342px;width:92px;height:2px;background:#fff"></div>
<div class="t" style="left:515px;top:346px;width:100px;text-align:center">1000 km</div>

<!-- legend panel -->
<div class="a" style="left:852px;top:56px;width:1px;height:312px;background:#e3e3e3"></div>
<div class="a" style="left:852px;top:77px;width:245px;height:290px;background:#fff;border:1px solid #dcdcdc;border-top-color:#e8e8e8"></div>
<div class="tab" style="left:903px;top:59px;width:41px;height:18px"></div>
<div class="tab" style="left:943px;top:59px;width:53px;height:18px"></div>
<div class="tabs" style="left:853px;top:56px;width:51px;height:22px;border-left:none;border-top:none"></div>
<div class="t" style="letter-spacing:-0.32px;left:860px;top:59px">Legend</div>
<div class="t" style="letter-spacing:-0.62px;left:907px;top:61px">GPS</div>
<div class="t" style="letter-spacing:-0.36px;left:950px;top:61px">Statistics</div>
<div class="a" style="left:862px;top:84px;width:227px;height:88px;background:#fff;border:1px solid #828790"></div>
<div class="t ui" style="letter-spacing:-0.1px;left:876px;top:89px;color:#1e3287">Above Ground</div>
<div class="a" style="left:958px;top:95px;width:119px;height:1px;background:#a0b0d8"></div>
<svg class="a" style="left:872px;top:110px" width="8" height="11"><path d="M.5 .5l6.500 5-6.500 5z" fill="#5a8ae0" stroke="#2a50a8" stroke-width=".8"/></svg>
<div class="t" style="letter-spacing:0.21px;left:885px;top:109px;font-weight:bold;font-size:11.500px">Ground Level*</div>
<div class="t" style="letter-spacing:0.13px;left:864px;top:178px">* missing primary GIS layers for this level</div>
<div class="a" style="left:859px;top:199px;width:232px;height:161px;background:#fff;border:1px solid;border-color:#a0a0a0 #fff #fff #a0a0a0;box-shadow:inset 1px 1px 0 #696969,inset -1px -1px 0 #e3e3e3"></div>
<svg class="a" style="left:865px;top:206px" width="9" height="9"><rect x=".5" y=".5" width="8" height="8" fill="#fff" stroke="#969696"/><path d="M2 4.500h5" stroke="#000"/></svg>
<svg class="a" style="left:880px;top:204px" width="12" height="12"><rect x=".5" y=".5" width="11" height="11" fill="#fff" stroke="#8e8e8e"/><rect x="1.500" y="1.500" width="9" height="9" fill="none" stroke="#d0d0d0"/><path d="M2.800 5.800l2.200 2.400 4.200-4.800" fill="none" stroke="#000" stroke-width="2"/></svg>
<div class="t" style="letter-spacing:0.02px;left:897px;top:203px">Defects</div>
<div class="a" style="left:889px;top:221px;width:11px;height:11px;background:#008000"></div>
<div class="a" style="left:889px;top:236px;width:11px;height:11px;background:#ffa500"></div>
<div class="a" style="left:889px;top:251px;width:11px;height:11px;background:#ff0000"></div>
<div class="t" style="letter-spacing:-0.27px;left:913px;top:220px;font-size:9.500px">Complete</div>
<div class="t" style="left:913px;top:235px;font-size:9.500px">Attention</div>
<div class="t" style="left:913px;top:250px;font-size:9.500px">Overdue</div>
<div class="a" style="left:861px;top:267px;width:229px;height:21px;background:#cce4ff;border:1px solid #3c78d0"></div>
<svg class="a" style="left:880px;top:271px" width="12" height="12"><rect x=".5" y=".5" width="11" height="11" fill="#fff" stroke="#8e8e8e"/><rect x="1.500" y="1.500" width="9" height="9" fill="none" stroke="#d0d0d0"/><path d="M2.800 5.800l2.200 2.400 4.200-4.800" fill="none" stroke="#000" stroke-width="2"/></svg>
<div class="t" style="letter-spacing:-0.22px;left:898px;top:269px">australia</div>

<!-- LOWER RIGHT CONTAINER -->
<div class="a" style="left:280px;top:373px;width:820px;height:333px;border:1px solid #696969"></div>
<div class="t" style="letter-spacing:-0.49px;left:287px;top:379px;font-size:17px;font-weight:bold;color:#1e90ff;line-height:18px;word-spacing:1px">Fleet Information</div>
<svg class="a" style="left:1080px;top:381px" width="14" height="14"><rect x=".5" y=".5" width="13" height="12.500" rx="2.500" fill="#d8383c" stroke="#a82024"/><path d="M4 3.800l6 6M10 3.800l-6 6" stroke="#fff" stroke-width="2"/></svg>
<!-- tab page -->
<div class="a" style="left:284px;top:424px;width:810px;height:245px;background:#fff;border:1px solid #dcdcdc"></div>
<div class="a" style="left:288px;top:426px;width:804px;height:240px;background:#f0f0f0"></div>
<div class="tab" style="left:380px;top:406px;width:76px;height:18px"></div>
<div class="t" style="letter-spacing:-0.44px;left:384px;top:409px">Custom Fields</div>
<div class="tab" style="left:455px;top:406px;width:43px;height:18px"></div>
<div class="t" style="letter-spacing:-0.54px;left:462px;top:409px">Units</div>
<div class="tab" style="left:497px;top:406px;width:51px;height:18px"></div>
<div class="t" style="letter-spacing:-0.23px;left:504px;top:409px">Defects</div>
<div class="tab" style="left:547px;top:406px;width:66px;height:18px"></div>
<div class="t" style="letter-spacing:-0.27px;left:553px;top:409px">Inspections</div>
<div class="tab" style="left:612px;top:406px;width:44px;height:18px"></div>
<div class="t" style="letter-spacing:-0.12px;left:619px;top:409px">Works</div>
<div class="tab" style="left:655px;top:406px;width:55px;height:18px"></div>
<div class="t" style="letter-spacing:-0.37px;left:662px;top:409px">Financial</div>
<div class="tab" style="left:709px;top:406px;width:43px;height:18px"></div>
<div class="t" style="letter-spacing:-0.7px;left:717px;top:409px">Risk</div>
<div class="tab" style="left:751px;top:406px;width:70px;height:18px"></div>
<div class="t" style="letter-spacing:-0.3px;left:758px;top:409px">Attachments</div>
<div class="tabs" style="left:284px;top:404px;width:97px;height:22px"></div>
<div class="t" style="letter-spacing:-0.35px;left:292px;top:407px">Asset Information</div>
<div class="t" style="left:299px;top:436px">Asset Name:</div>
<div class="t" style="left:299px;top:462px">Asset Register ID:</div>
<div class="t" style="left:299px;top:488px">GIS ID:</div>
<div class="t" style="left:299px;top:515px">Maintenance Category:</div>
<div class="t" style="left:299px;top:542px">Owner:</div>
<div class="t" style="left:299px;top:568px">Latitude:</div>
<div class="t" style="left:299px;top:594px">Longitude:</div>
<div class="inp" style="left:424px;top:435px;width:300px;height:20px"></div><div class="t" style="left:427px;top:438px">Pump 1</div>
<div class="inp" style="left:424px;top:461px;width:114px;height:20px"></div><div class="t" style="left:427px;top:464px">102102</div>
<div class="inp" style="left:424px;top:487px;width:114px;height:20px"></div><div class="t" style="left:427px;top:490px">0</div>
<div class="cmb" style="left:424px;top:513px;width:344px;height:21px"></div><div class="t" style="left:428px;top:517px">10,000 km/year</div>
<div class="cmb" style="left:424px;top:540px;width:344px;height:21px"></div><div class="t" style="left:428px;top:544px">Unassigned</div>
<svg class="chev" style="left:754px;top:521px" viewBox="0 0 9 5"><path d="M.5 .5l4 4 4-4" fill="none" stroke="#333" stroke-width="1"/></svg>
<svg class="chev" style="left:754px;top:548px" viewBox="0 0 9 5"><path d="M.5 .5l4 4 4-4" fill="none" stroke="#333" stroke-width="1"/></svg>
<div class="inp" style="left:424px;top:567px;width:111px;height:20px"></div><div class="t" style="left:426px;top:570px">-37.278596444</div>
<div class="inp" style="left:424px;top:593px;width:111px;height:20px"></div><div class="t" style="left:426px;top:596px">147.006089676</div>
<div class="t" style="left:543px;top:568px">37° 16' 42.947198" S</div>
<div class="t" style="left:543px;top:594px">147° 0' 21.922834" E</div>
<div class="btn" style="left:425px;top:620px;width:109px;height:21px"></div>
<svg class="a" style="left:454px;top:623px" width="11" height="15"><path d="M5.500 14.500c-2.500-4-5-6.500-5-9.500a5 5 0 0 1 10 0c0 3-2.500 5.500-5 9.500z" fill="#f48a8a"/><circle cx="5.500" cy="5" r="1.800" fill="#fff"/></svg>
<div class="t" style="left:471px;top:624px">Locate</div>
<div class="btn" style="left:285px;top:677px;width:87px;height:24px"></div>
<svg class="a" style="left:300px;top:681px" width="14" height="16"><rect x=".5" y=".5" width="13" height="15" rx="1.500" fill="#b86830" stroke="#8a4818"/><rect x="1.500" y="1" width="11" height="2" fill="#d89058"/><rect x="2.500" y="4.500" width="9" height="3" fill="#d08040" stroke="#8a4818" stroke-width=".6"/><rect x="2.500" y="8.500" width="9" height="3" fill="#d08040" stroke="#8a4818" stroke-width=".6"/><rect x="2.500" y="12" width="9" height="3" fill="#d08040" stroke="#8a4818" stroke-width=".6"/><path d="M6 6h2M6 10h2M6 13.500h2" stroke="#fff" stroke-width="1"/></svg>
<div class="t ui" style="letter-spacing:-0.34px;left:318px;top:682px">Archive</div>
<div class="btn" style="left:380px;top:677px;width:87px;height:24px"></div>
<svg class="a" style="left:400px;top:681px" width="16" height="16"><path d="M.5 .5h6l3 3v8h-9z" fill="#eaf2fc" stroke="#6a90d0"/><path d="M6.500 4.500h6l3 3v8h-9z" fill="#eaf2fc" stroke="#6a90d0"/><path d="M12.500 4.500v3h3" fill="none" stroke="#6a90d0"/></svg>
<div class="t ui" style="letter-spacing:-0.67px;left:419px;top:682px">Copy</div>
<div class="btn" style="left:941px;top:677px;width:73px;height:24px;background:#cccccc;border-color:#bfbfbf"></div>
<div class="t ui" style="left:941px;top:682px;width:73px;text-align:center;color:#a0a0a0;text-shadow:1px 1px 0 #fff"><u>S</u>ave</div>
<div class="btn" style="left:1022px;top:677px;width:73px;height:24px;background:#cccccc;border-color:#bfbfbf"></div>
<div class="t ui" style="left:1022px;top:682px;width:73px;text-align:center;color:#a0a0a0;text-shadow:1px 1px 0 #fff"><u>R</u>evert</div>
<!-- window frame -->
<div class="a" style="left:0;top:0;width:1101px;height:732px;border:1px solid #707070;pointer-events:none"></div>
</body></html>
